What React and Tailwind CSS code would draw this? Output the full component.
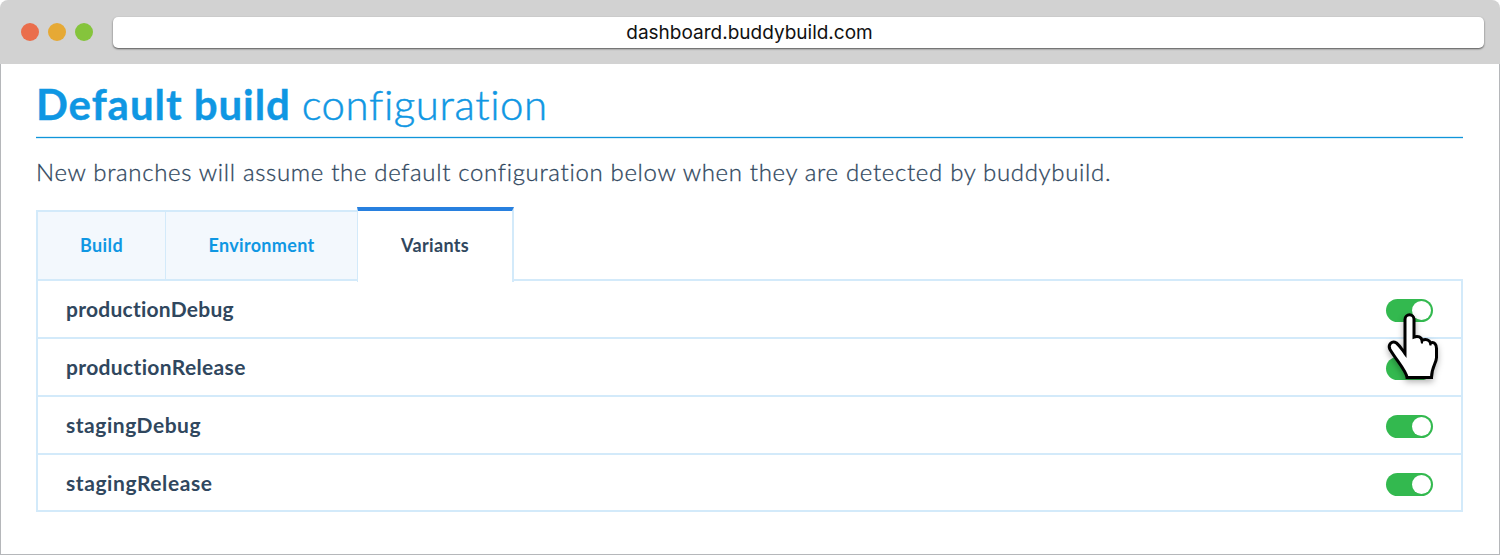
const variants = [
  { name: 'productionDebug', tracking: 'tracking-[0.25px]' },
  { name: 'productionRelease', tracking: 'tracking-[0.35px]' },
  { name: 'stagingDebug', tracking: 'tracking-[0.53px]' },
  { name: 'stagingRelease', tracking: 'tracking-[0.58px]' },
];

function Toggle() {
  return (
    <div className="flex h-[23px] w-[47px] items-center justify-end rounded-full bg-[#33b94f] pr-[2px]">
      <div className="size-[19px] rounded-full bg-white" />
    </div>
  );
}

function Pointer() {
  return (
    <svg
      className="absolute left-[1380px] top-[306px] drop-shadow-[0_3px_3px_rgba(0,0,0,0.3)]"
      width="68"
      height="82"
      viewBox="1380 306 68 82"
    >
      <path
        d="M1405 353.500V319.500C1405 313.300 1414 313.300 1414 319.500V337C1418 335.500 1421.500 337 1422 340.500C1426 338.500 1429.500 340 1430.500 343C1434.500 341.500 1436.500 344.500 1436.500 348.500V357.500C1436.500 363 1431.500 367 1431.500 377.500H1407C1406.500 371.500 1397 361 1390 349.500C1387.500 344.500 1392 340 1396.500 343C1400 346 1402 349.500 1405 353.500Z"
        fill="#fff"
        stroke="#000"
        strokeWidth="3"
      />
      <path d="M1422 339.500V343.500M1430.500 342V345.500" stroke="#000" strokeWidth="2" />
    </svg>
  );
}

export default function App() {
  return (
    <div className="relative flex h-[555px] w-[1500px] flex-col overflow-hidden bg-white font-['Lato',sans-serif]">
      <header className="flex h-16 shrink-0 items-center rounded-t-[8px] bg-[#d2d2d2] pl-[21px] pr-4">
        <div className="flex gap-[9px]">
          <span className="size-[18px] rounded-full bg-[#ea6e4c]" />
          <span className="size-[18px] rounded-full bg-[#e6a935]" />
          <span className="size-[18px] rounded-full bg-[#85c43c]" />
        </div>
        <div className="ml-5 flex h-[31px] flex-1 items-center justify-center rounded-[5px] bg-white pr-[98px] pt-[2px] font-['Inter',sans-serif] text-[19px] text-[#111] shadow-[0_1px_2px_0_rgba(0,0,0,0.6)]">
          dashboard.buddybuild.com
        </div>
      </header>
      <main className="flex-1 border-x border-b border-[#b5b7ba] px-[35px] pt-[18px]">
        <h1 className="h-[54px] whitespace-nowrap text-[42px] leading-[44px] text-[#0f97e3]">
          <span className="font-bold tracking-[0.95px] [-webkit-text-stroke:0.4px_#0f97e3]">Default build</span>{' '}
          <span className="font-light tracking-[0.58px] [-webkit-text-stroke:0.5px_#0f97e3]">configuration</span>
        </h1>
        <div className="h-[3px] w-[1427px] border-y border-[#d8eef9] bg-[#1095da]" />
        <p className="mt-[18px] h-[50px] whitespace-nowrap text-[24px] font-light leading-[30px] tracking-[0.67px] text-[#30475e] [-webkit-text-stroke:0.3px_#30475e]">
          New branches will assume the default configuration below when they are detected by buddybuild.
        </p>
        <nav className="flex h-[74px] w-[1427px] items-start text-[18px] font-bold text-[#0f97e3]">
          <div className="mt-[3px] flex h-[71px] w-[129px] items-center justify-center border-y-2 border-l-2 border-[#d3eafa] bg-[#f3f8fd] tracking-[0.4px]">
            Build
          </div>
          <div className="mt-[3px] flex h-[71px] w-[192px] items-center justify-center border-y-2 border-l border-[#d3eafa] bg-[#f3f8fd] tracking-[0.32px]">
            Environment
          </div>
          <div className="flex h-[75px] w-[157px] items-center justify-center border-l border-r-2 border-t-4 border-x-[#d3eafa] border-t-[#2880df] pb-[3px] tracking-[0.35px] text-[#30475e]">
            Variants
          </div>
          <div className="h-[74px] flex-1 border-b-2 border-[#d3eafa]" />
        </nav>
        <ul className="w-[1427px] border-x-2 border-[#d3eafa]">
          {variants.map(({ name, tracking }) => (
            <li key={name} className="flex h-[58px] items-center justify-between border-b-2 border-[#d3eafa] px-[28px] last:h-[57px]">
              <span className={`text-[21px] font-bold text-[#30475e] ${tracking}`}>{name}</span>
              <div className="pt-[3px]">
                <Toggle />
              </div>
            </li>
          ))}
        </ul>
      </main>
      <Pointer />
    </div>
  );
}
